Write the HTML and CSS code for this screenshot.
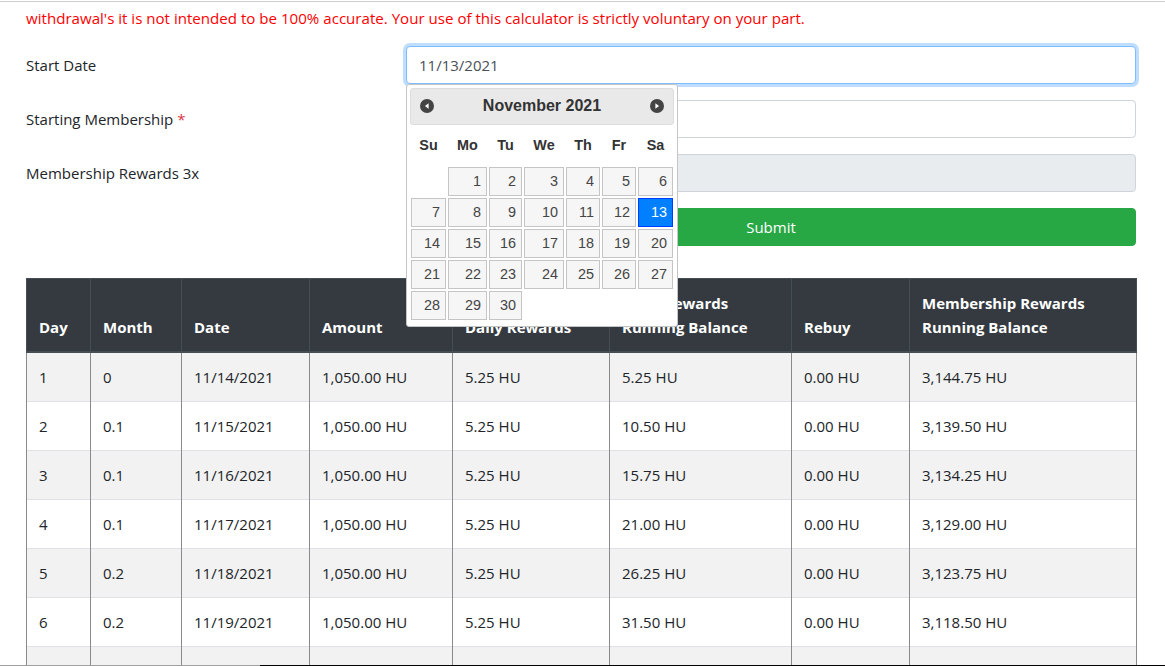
FILE: index.html
```html
<!DOCTYPE html>
<html lang="en">
<head>
<meta charset="utf-8">
<title>Membership Rewards Calculator</title>
<link rel="stylesheet" href="styles.css">
</head>
<body>
<div class="topline"></div>
<div class="wrap">
  <p class="disclaimer">withdrawal's it is not intended to be 100% accurate. Your use of this calculator is strictly voluntary on your part.</p>

  <div class="form-row">
    <label class="form-label">Start Date</label>
    <div class="form-field picker-host">
      <input class="form-input is-focused" type="text" value="11/13/2021">
      <div class="datepicker">
        <div class="dp-header">
          <span class="dp-nav">
            <svg width="14" height="14" viewBox="0 0 14 14"><circle cx="7" cy="7" r="7" fill="#444"/><path d="M8.6 4.2 L4.9 7 L8.6 9.8 Z" fill="#fff"/></svg>
          </span>
          <span class="dp-title">November 2021</span>
          <span class="dp-nav">
            <svg width="14" height="14" viewBox="0 0 14 14"><circle cx="7" cy="7" r="7" fill="#444"/><path d="M5.4 4.2 L9.1 7 L5.4 9.8 Z" fill="#fff"/></svg>
          </span>
        </div>
        <div class="dp-grid dp-names">
          <span>Su</span><span>Mo</span><span>Tu</span><span>We</span><span>Th</span><span>Fr</span><span>Sa</span>
        </div>
        <div class="dp-grid dp-days">
          <span class="dp-empty"></span>
          <a class="dp-day">1</a><a class="dp-day">2</a><a class="dp-day">3</a><a class="dp-day">4</a><a class="dp-day">5</a><a class="dp-day">6</a>
          <a class="dp-day">7</a><a class="dp-day">8</a><a class="dp-day">9</a><a class="dp-day">10</a><a class="dp-day">11</a><a class="dp-day">12</a><a class="dp-day is-active">13</a>
          <a class="dp-day">14</a><a class="dp-day">15</a><a class="dp-day">16</a><a class="dp-day">17</a><a class="dp-day">18</a><a class="dp-day">19</a><a class="dp-day">20</a>
          <a class="dp-day">21</a><a class="dp-day">22</a><a class="dp-day">23</a><a class="dp-day">24</a><a class="dp-day">25</a><a class="dp-day">26</a><a class="dp-day">27</a>
          <a class="dp-day">28</a><a class="dp-day">29</a><a class="dp-day">30</a>
        </div>
      </div>
    </div>
  </div>

  <div class="form-row">
    <label class="form-label">Starting Membership <span class="req">*</span></label>
    <div class="form-field">
      <input class="form-input" type="text" value="">
    </div>
  </div>

  <div class="form-row">
    <label class="form-label">Membership Rewards 3x</label>
    <div class="form-field">
      <input class="form-input is-disabled" type="text" value="" disabled>
    </div>
  </div>

  <div class="form-row submit-row">
    <div class="form-label"></div>
    <div class="form-field">
      <button class="btn-submit" type="button">Submit</button>
    </div>
  </div>

  <div class="table-wrap">
    <table class="results">
      <colgroup>
        <col style="width:64px"><col style="width:91px"><col style="width:128px"><col style="width:143px">
        <col style="width:157px"><col style="width:182px"><col style="width:118px"><col style="width:227px">
      </colgroup>
      <thead>
        <tr>
          <th>Day</th><th>Month</th><th>Date</th><th>Amount</th><th>Daily Rewards</th>
          <th>Daily Rewards<br>Running Balance</th><th>Rebuy</th><th>Membership Rewards<br>Running Balance</th>
        </tr>
      </thead>
      <tbody>
        <tr><td>1</td><td>0</td><td>11/14/2021</td><td>1,050.00 HU</td><td>5.25 HU</td><td>5.25 HU</td><td>0.00 HU</td><td>3,144.75 HU</td></tr>
        <tr><td>2</td><td>0.1</td><td>11/15/2021</td><td>1,050.00 HU</td><td>5.25 HU</td><td>10.50 HU</td><td>0.00 HU</td><td>3,139.50 HU</td></tr>
        <tr><td>3</td><td>0.1</td><td>11/16/2021</td><td>1,050.00 HU</td><td>5.25 HU</td><td>15.75 HU</td><td>0.00 HU</td><td>3,134.25 HU</td></tr>
        <tr><td>4</td><td>0.1</td><td>11/17/2021</td><td>1,050.00 HU</td><td>5.25 HU</td><td>21.00 HU</td><td>0.00 HU</td><td>3,129.00 HU</td></tr>
        <tr><td>5</td><td>0.2</td><td>11/18/2021</td><td>1,050.00 HU</td><td>5.25 HU</td><td>26.25 HU</td><td>0.00 HU</td><td>3,123.75 HU</td></tr>
        <tr><td>6</td><td>0.2</td><td>11/19/2021</td><td>1,050.00 HU</td><td>5.25 HU</td><td>31.50 HU</td><td>0.00 HU</td><td>3,118.50 HU</td></tr>
        <tr class="row-partial"><td></td><td></td><td></td><td></td><td></td><td></td><td></td><td></td></tr>
      </tbody>
    </table>
  </div>
</div>
<div class="bottomline"></div>
</body>
</html>
```

FILE: styles.css
```css
html, body {
  margin: 0;
  padding: 0;
  overflow: hidden;
  background: #fff;
}
body {
  font-family: "Open Sans", "Noto Sans", "Liberation Sans", sans-serif;
  font-size: 15px;
  line-height: 24px;
  color: #212529;
}
.topline {
  height: 1px;
  margin-top: 1px;
  background: #cfcfcf;
}
.wrap {
  width: 1140px;
  margin-left: 11px;
}
.disclaimer {
  margin: 4px 0 0 15px;
  color: #ff0000;
  font-size: 15.1px;
  line-height: 24px;
}
.form-row {
  display: flex;
  margin-top: 16px;
}
.form-label {
  box-sizing: border-box;
  flex: 0 0 380px;
  padding: 7px 15px 0 15px;
  line-height: 24px;
  color: #212529;
}
.req {
  color: #dc3545;
}
.form-field {
  box-sizing: border-box;
  flex: 0 0 760px;
  padding: 0 15px;
}
.picker-host {
  position: relative;
}
.form-input {
  box-sizing: border-box;
  display: block;
  width: 100%;
  height: 38px;
  padding: 6px 12px;
  font-family: inherit;
  font-size: 15px;
  line-height: 24px;
  color: #495057;
  background: #fff;
  border: 1px solid #ced4da;
  border-radius: 4px;
  outline: none;
}
.form-input.is-focused {
  border-color: #80bdff;
  box-shadow: 0 0 0 3px rgba(0, 123, 255, 0.25);
}
.form-input.is-disabled {
  background: #e9ecef;
}
.btn-submit {
  box-sizing: border-box;
  display: block;
  width: 100%;
  height: 38px;
  font-family: inherit;
  font-size: 15px;
  line-height: 24px;
  color: #fff;
  background: #28a745;
  border: 1px solid #28a745;
  border-radius: 4px;
}

/* datepicker */
.datepicker {
  position: absolute;
  left: 15px;
  top: 38px;
  z-index: 10;
  box-sizing: border-box;
  width: 272px;
  padding: 3px 3px 6px 3px;
  background: #fff;
  border: 1px solid #c5c5c5;
  border-radius: 3px;
  font-family: "Liberation Sans", Arial, sans-serif;
  color: #333;
}
.dp-header {
  box-sizing: border-box;
  height: 37px;
  display: flex;
  align-items: center;
  justify-content: space-between;
  padding: 0 9px;
  background: #e9e9e9;
  border: 1px solid #dddddd;
  border-radius: 3px;
}
.dp-nav {
  display: flex;
  width: 14px;
  height: 14px;
  margin-top: -1px;
}
.dp-title {
  font-weight: bold;
  font-size: 16px;
  color: #333;
  margin-top: -1px;
}
.dp-grid {
  display: grid;
  grid-template-columns: 35px 39px 33px 40px 34px 34px 35px;
  column-gap: 2px;
  margin-left: 1px;
}
.dp-names {
  height: 40px;
  line-height: 40px;
  font-size: 14.4px;
  font-weight: bold;
  text-align: center;
  color: #333;
}
.dp-days {
  margin-top: 2px;
  row-gap: 2px;
  grid-auto-rows: 29px;
}
.dp-day {
  box-sizing: border-box;
  display: block;
  padding: 0 5px 0 0;
  line-height: 27px;
  font-size: 14.4px;
  text-align: right;
  color: #454545;
  background: #f6f6f6;
  border: 1px solid #c5c5c5;
}
.dp-day.is-active {
  color: #fff;
  background: #007fff;
  border-color: #003eff;
}

/* table */
.table-wrap {
  margin-top: 32px;
  padding: 0 15px;
}
.results {
  width: 1110px;
  table-layout: fixed;
  border-collapse: collapse;
}
.results th {
  padding: 12px;
  text-align: left;
  vertical-align: bottom;
  font-weight: bold;
  color: #fff;
  background: #343a40;
  border: 1px solid #454d55;
  border-bottom-width: 2px;
  line-height: 24px;
}
.results td {
  padding: 12px;
  line-height: 24px;
  vertical-align: top;
  border-top: 1px solid #dee2e6;
  border-left: 1px solid #8a8a8a;
  border-right: 1px solid #8a8a8a;
}
.results .row-partial td {
  height: 24px;
}
.results tbody tr:nth-child(odd) td {
  background: #f2f2f2;
}
.bottomline {
  position: fixed;
  left: 0;
  right: 0;
  bottom: 0;
  height: 1px;
  background: linear-gradient(to right, #a0a0a0 0, #a0a0a0 260px, #000 260px, #000 100%);
}
```
